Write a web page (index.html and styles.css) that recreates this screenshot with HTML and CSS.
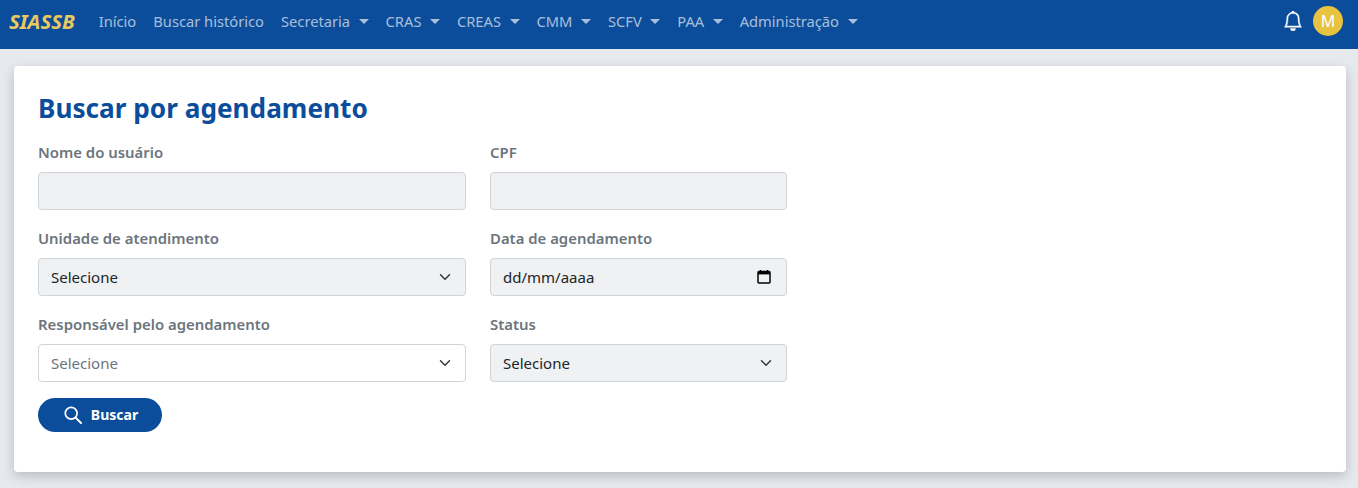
FILE: index.html
```html
<!DOCTYPE html>
<html lang="pt-BR">
<head>
    <meta charset="UTF-8">
    <meta name="viewport" content="width=device-width, initial-scale=1.0">
    <title>SIASSB - Buscar por agendamento</title>
    <link rel="stylesheet" href="styles.css">
</head>
<body>
    <!-- top menu -->
    <nav class="navbar">
        <a class="brand" href="#">SIASSB</a>
        <ul class="nav-list">
            <li><a href="#">Início</a></li>
            <li><a href="#">Buscar histórico</a></li>
            <li><a class="caret" href="#">Secretaria</a></li>
            <li><a class="caret" href="#">CRAS</a></li>
            <li><a class="caret" href="#">CREAS</a></li>
            <li><a class="caret" href="#">CMM</a></li>
            <li><a class="caret" href="#">SCFV</a></li>
            <li><a class="caret" href="#">PAA</a></li>
            <li><a class="caret" href="#">Administração</a></li>
        </ul>
        <div class="nav-right">
            <svg class="bell" width="20" height="20" viewBox="0 0 16 16" fill="#fff" stroke="#fff" stroke-width="0.35">
                <path d="M8 16a2 2 0 0 0 2-2H6a2 2 0 0 0 2 2zM8 1.918l-.797.161A4.002 4.002 0 0 0 4 6c0 .628-.134 2.197-.459 3.742-.16.767-.376 1.566-.663 2.258h10.244c-.287-.692-.502-1.49-.663-2.258C12.134 8.197 12 6.628 12 6a4.002 4.002 0 0 0-3.203-3.92L8 1.917zM14.22 12c.223.447.481.801.78 1H1c.299-.199.557-.553.78-1C2.68 10.2 3 6.88 3 6c0-2.42 1.72-4.44 4.005-4.901a1 1 0 1 1 1.99 0A5.002 5.002 0 0 1 13 6c0 .88.32 4.2 1.22 6z"/>
            </svg>
            <span class="avatar">M</span>
        </div>
    </nav>

    <main class="card">
        <h1>Buscar por agendamento</h1>
        <form class="search-form">
            <div class="field">
                <label>Nome do usuário</label>
                <input class="control filled" type="text">
            </div>
            <div class="field">
                <label>CPF</label>
                <input class="control filled" type="text">
            </div>
            <div class="field">
                <label>Unidade de atendimento</label>
                <select class="control filled"><option>Selecione</option></select>
            </div>
            <div class="field">
                <label>Data de agendamento</label>
                <div class="control filled date-box">
                    <span>dd/mm/aaaa</span>
                    <svg width="14" height="14" viewBox="0 0 14 14">
                        <path d="M3.5 0v1.5M10.5 0v1.5" stroke="#000" stroke-width="1.6" fill="none"/>
                        <rect x="1" y="1.5" width="12" height="11.5" rx="1" fill="none" stroke="#000" stroke-width="1.5"/>
                        <rect x="1" y="2" width="12" height="2.4" fill="#000"/>
                    </svg>
                </div>
            </div>
            <div class="field">
                <label>Responsável pelo agendamento</label>
                <select class="control muted"><option>Selecione</option></select>
            </div>
            <div class="field">
                <label>Status</label>
                <select class="control filled"><option>Selecione</option></select>
            </div>
        </form>
        <button class="search-btn" type="button">
            <svg width="18" height="18" viewBox="0 0 18 18" fill="none" stroke="#fff">
                <circle cx="7.2" cy="7.2" r="5.9" stroke-width="1.7"/>
                <path d="M11.6 11.6l5.4 5.4" stroke-width="2" stroke-linecap="round"/>
            </svg>
            Buscar
        </button>
    </main>
</body>
</html>
```

FILE: styles.css
```css
body {
    margin: 0;
    padding-bottom: 16px;
    background-color: #e6e9ee;
    font-family: "Noto Sans", Arial, sans-serif;
    font-size: 15px;
    color: #212529;
}

/* Top menu */
.navbar {
    display: flex;
    align-items: center;
    height: 49px;
    padding: 0 15px 7px 9px;
    box-sizing: border-box;
    background-color: #0c4d9b;
}

.brand {
    margin-right: 24px;
    color: #e8ca5e;
    font-size: 20.4px;
    font-weight: 700;
    font-style: italic;
    text-decoration: none;
}

.nav-list {
    display: flex;
    gap: 17px;
    margin: 0;
    padding: 0;
    list-style: none;
    font-size: 14.7px;
}

.nav-list a {
    color: rgba(255, 255, 255, 0.65);
    text-decoration: none;
}

.caret::after {
    content: "";
    display: inline-block;
    margin-left: 8.5px;
    vertical-align: 3px;
    border-top: 5px solid;
    border-left: 5px solid transparent;
    border-right: 5px solid transparent;
}

.nav-right {
    display: flex;
    align-items: center;
    gap: 10px;
    margin-left: auto;
}

.avatar {
    display: flex;
    align-items: center;
    justify-content: center;
    width: 30px;
    height: 30px;
    border-radius: 50%;
    background-color: #e8c33f;
    color: #fff;
    font-size: 16px;
}

/* Main card */
.card {
    height: 406px;
    box-sizing: border-box;
    margin: 17px 12px 0 14px;
    padding: 24px;
    background: #fff;
    border-radius: 4px;
    box-shadow: 0 4px 12px rgba(0, 0, 0, 0.2);
}

h1 {
    margin: 0 0 16px;
    color: #0c4d9b;
    font-size: 26.2px;
    font-weight: 700;
    line-height: 36px;
}

.search-form {
    display: grid;
    grid-template-columns: 428px 297px;
    column-gap: 24px;
    row-gap: 18px;
}

label {
    display: block;
    height: 20px;
    margin-bottom: 10px;
    color: #6c757d;
    font-weight: 600;
    font-size: 14.9px;
    line-height: 20px;
}

.control {
    display: block;
    width: 100%;
    height: 38px;
    box-sizing: border-box;
    padding: 0 12px;
    border: 1px solid #ced4da;
    border-radius: 4px;
    background-color: #fff;
    color: #212529;
    font-family: inherit;
    font-size: 15px;
}

.filled {
    background-color: #eff1f3;
}

.muted {
    color: #6c757d;
}

select.control {
    appearance: none;
    background-image: url("data:image/svg+xml,%3csvg xmlns='http://www.w3.org/2000/svg' viewBox='0 0 16 16'%3e%3cpath fill='none' stroke='%23343a40' stroke-linecap='round' stroke-linejoin='round' stroke-width='2' d='M2 5l6 6 6-6'/%3e%3c/svg%3e");
    background-repeat: no-repeat;
    background-position: right 14px center;
    background-size: 12px 12px;
}

.date-box {
    display: flex;
    align-items: center;
    justify-content: space-between;
    padding-right: 15px;
}

/* Button */
.search-btn {
    display: flex;
    align-items: center;
    justify-content: center;
    gap: 9px;
    width: 124px;
    height: 34px;
    margin-top: 16px;
    padding: 0 0 2px 2px;
    border: none;
    border-radius: 17px;
    background-color: #0c4d9b;
    color: #fff;
    font-family: inherit;
    font-size: 14px;
    font-weight: 700;
}

.search-btn svg {
    margin-top: 2px;
}
```
